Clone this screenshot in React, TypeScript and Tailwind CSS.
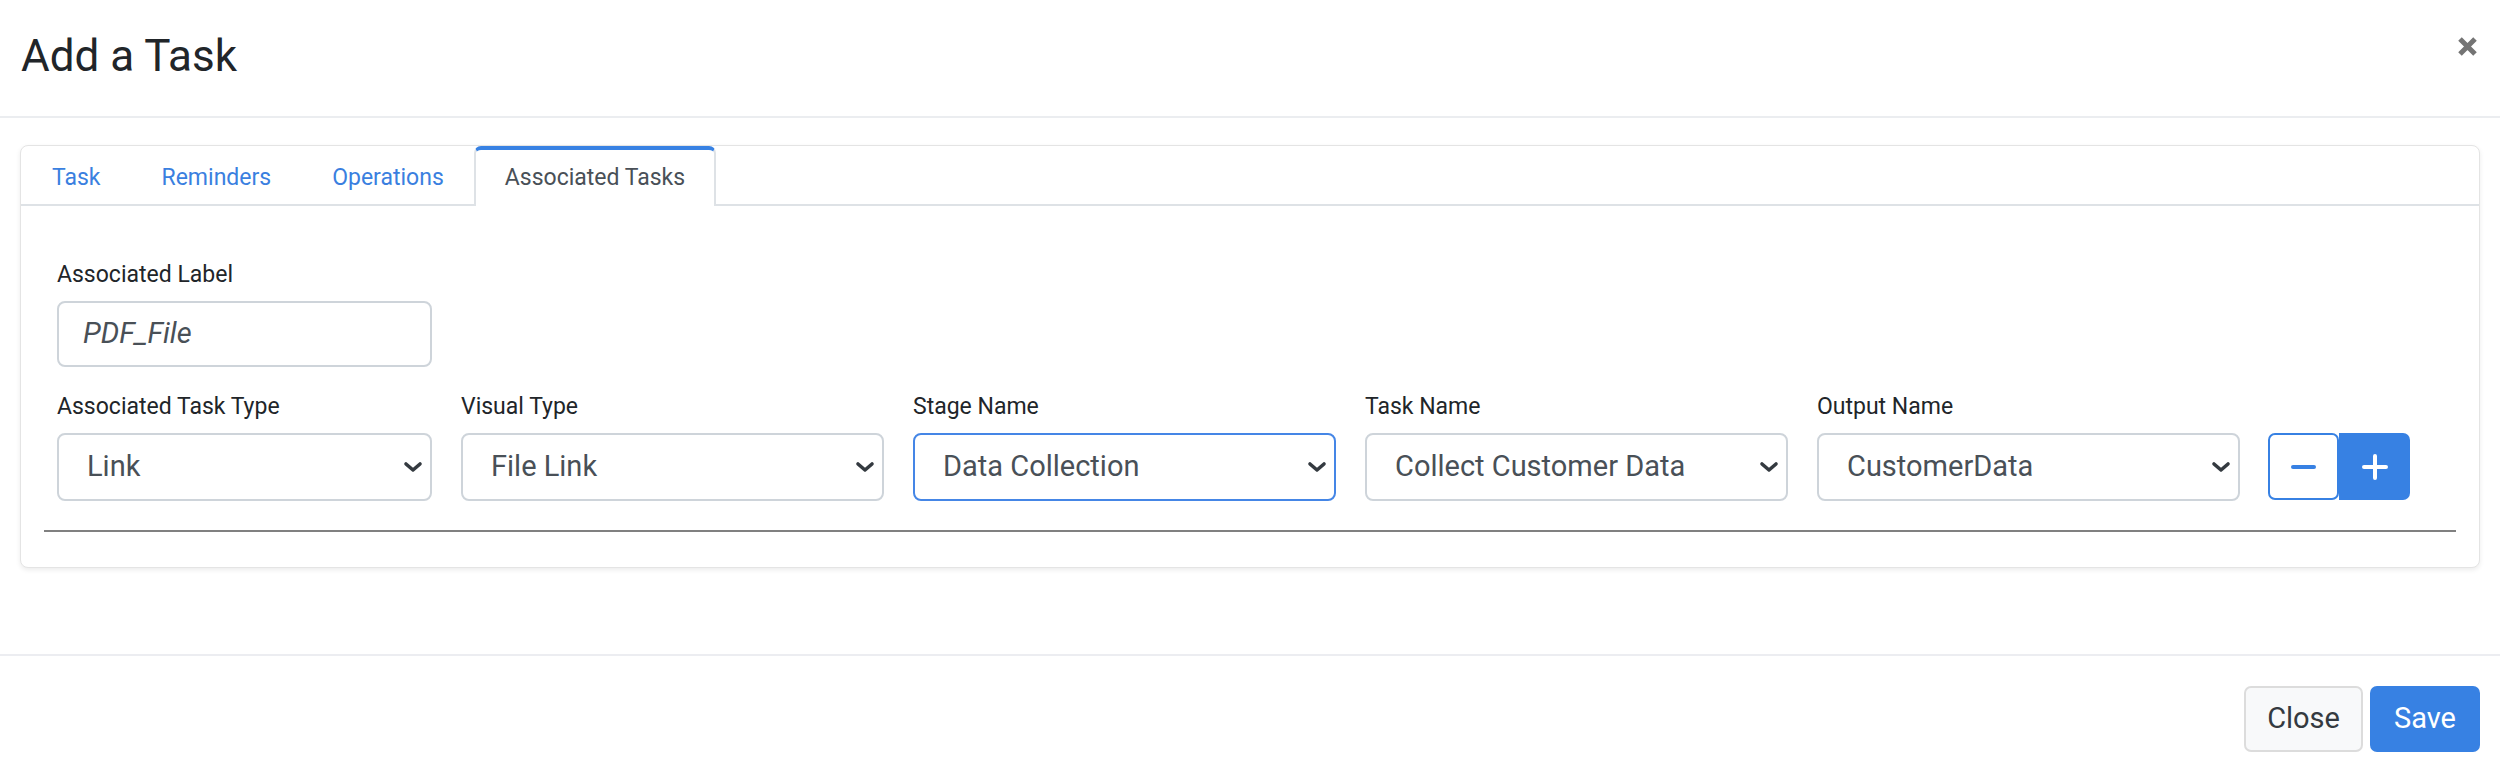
import React from "react";

const Chevron = () => (
  <svg width="20" height="12" viewBox="0 0 20 12" fill="none">
    <path d="M3 3l7 6 7-6" stroke="#343a40" strokeWidth="3.6" strokeLinecap="round" strokeLinejoin="round" />
  </svg>
);

type SelectProps = { label: string; value: string; width: string; focused?: boolean };

const SelectField = ({ label, value, width, focused }: SelectProps) => (
  <div className={`flex flex-col ${width}`}>
    <label className="text-[23px] leading-[33px] text-[#212529] mb-[10px]">{label}</label>
    <div
      className={
        focused
          ? "h-[68px] rounded-[8px] border-2 border-[#4586e6] bg-white flex items-center justify-between pl-[28px] pr-[7px]"
          : "h-[68px] rounded-[8px] border-2 border-[#ced4da] bg-white flex items-center justify-between pl-[28px] pr-[7px]"
      }
    >
      <span className="text-[29px] text-[#495057]">{value}</span>
      <Chevron />
    </div>
  </div>
);

const tabs = ["Task", "Reminders", "Operations", "Associated Tasks"];

export default function App() {
  return (
    <div className="w-[2500px] h-[770px] bg-white flex flex-col font-['Roboto',sans-serif]">
      {/* header */}
      <div className="h-[118px] shrink-0 flex justify-between border-b-2 border-[#ebedf0] pl-[21px] pr-[22px]">
        <h1 className="text-[44px] leading-none text-[#212529] mt-[34px]">Add a Task</h1>
        <button className="mt-[35px] self-start w-[22px] h-[22px] flex items-center justify-center">
          <svg width="21" height="21" viewBox="0 0 21 21">
            <path d="M3 3l15 15M18 3L3 18" stroke="#747474" strokeWidth="5" />
          </svg>
        </button>
      </div>

      {/* body */}
      <div className="flex-1 px-[20px] pt-[27px]">
        <div className="rounded-[8px] border border-[#e4e4e4] bg-white shadow-[0_2px_5px_rgba(0,0,0,0.08)]">
          <div className="flex border-b-2 border-[#dee2e6]">
            {tabs.map((t, i) =>
              i === 3 ? (
                <div
                  key={t}
                  className="-mb-[2px] h-[60px] pl-[29px] pr-[29px] flex items-center text-[23px] text-[#495057] bg-white border-t-4 border-t-[#3781e3] border-x-2 border-x-[#dee2e6] rounded-t-[7px]"
                >
                  {t}
                </div>
              ) : (
                <div
                  key={t}
                  className="-mb-[2px] h-[60px] pl-[29px] pr-[28px] flex items-center text-[23px] text-[#3a7fe0] border-t-4 border-x-2 border-transparent"
                >
                  {t}
                </div>
              )
            )}
          </div>

          <div className="px-[23px] pt-[52px] pb-[35px]">
            <div className="px-[13px]">
              <div className="flex flex-col w-[375px]">
                <label className="text-[23px] leading-[33px] text-[#212529] mb-[10px]">Associated Label</label>
                <div className="h-[66px] rounded-[8px] border-2 border-[#ced4da] flex items-center pl-[24px]">
                  <span className="text-[29px] italic text-[#495057]">PDF_File</span>
                </div>
              </div>

              <div className="flex items-end gap-[29px] mt-[23px]">
                <SelectField label="Associated Task Type" value="Link" width="w-[375px]" />
                <SelectField label="Visual Type" value="File Link" width="w-[423px]" />
                <SelectField label="Stage Name" value="Data Collection" width="w-[423px]" focused />
                <SelectField label="Task Name" value="Collect Customer Data" width="w-[423px]" />
                <SelectField label="Output Name" value="CustomerData" width="w-[423px]" />
                <div className="flex mb-[1px] -ml-[1px]">
                  <button className="w-[71px] h-[67px] rounded-[7px] border-2 border-[#3781e3] bg-white flex items-center justify-center">
                    <span className="block w-[25px] h-[4px] rounded-full bg-[#3781e3]" />
                  </button>
                  <button className="w-[71px] h-[67px] rounded-r-[7px] bg-[#3781e3] flex items-center justify-center">
                    <svg width="26" height="26" viewBox="0 0 26 26">
                      <path d="M13 2v22M2 13h22" stroke="#fff" strokeWidth="4" strokeLinecap="round" />
                    </svg>
                  </button>
                </div>
              </div>
            </div>

            <div className="mt-[29px] h-[2px] bg-[#808080]" />
          </div>
        </div>
      </div>

      {/* footer */}
      <div className="h-[116px] shrink-0 border-t-2 border-[#ecedf1] flex justify-end items-start gap-[7px] pt-[30px] pr-[20px]">
        <button className="h-[66px] px-[21px] rounded-[7px] border-2 border-[#dcdcdc] bg-[#f8f9fa] text-[29px] text-[#343a40]">
          Close
        </button>
        <button className="h-[66px] px-[24px] rounded-[7px] bg-[#3781e3] text-[29px] text-white">Save</button>
      </div>
    </div>
  );
}
